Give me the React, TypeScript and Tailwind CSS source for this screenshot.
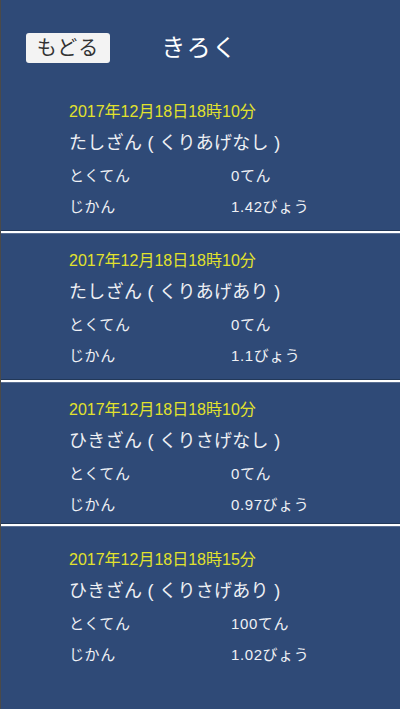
import React from "react";

type Rec = {
  date: string;
  title: string;
  score: string;
  time: string;
  top: string;
  sep: string | null;
};

const records: Rec[] = [
  { date: "2017年12月18日18時10分", title: "たしざん ( くりあげなし )", score: "0てん", time: "1.42びょう", top: "pt-[39px]", sep: "mt-[13px]" },
  { date: "2017年12月18日18時10分", title: "たしざん ( くりあげあり )", score: "0てん", time: "1.1びょう", top: "pt-[17px]", sep: "mt-[13px]" },
  { date: "2017年12月18日18時10分", title: "ひきざん ( くりさげなし )", score: "0てん", time: "0.97びょう", top: "pt-[17px]", sep: "mt-[8px]" },
  { date: "2017年12月18日18時15分", title: "ひきざん ( くりさげあり )", score: "100てん", time: "1.02びょう", top: "pt-[23px]", sep: null },
];

const font = { fontFamily: '"Liberation Sans", "Noto Sans CJK JP", sans-serif' };

export default function App() {
  return (
    <div
      className="w-[400px] h-[709px] bg-[#2f4a77] border-l border-[#4a4a4a] overflow-hidden text-[#eef0f4]"
      style={font}
    >
      <div className="grid grid-cols-[1fr_auto_1fr] items-center pt-[33px]">
        <div className="pl-[25px]">
          <button className="w-[84px] h-[30px] bg-[#f3f3f3] rounded-[3px] text-[#333333] text-[20px] leading-[30px] tracking-[1px] flex items-center justify-center">
            もどる
          </button>
        </div>
        <div className="text-[24px] leading-[30px] tracking-[1.5px] text-white -ml-[2px]">きろく</div>
        <div />
      </div>

      {records.map((r, i) => (
        <div key={i}>
          <div className={`pl-[68px] ${r.top}`}>
            <div className="text-[16px] leading-[20px] text-[#e2e22c]">{r.date}</div>
            <div className="mt-[9px] text-[18px] leading-[24px] tracking-[0.3px]">{r.title}</div>
            <div className="mt-[11px] grid grid-cols-[162px_1fr] text-[15px] leading-[20px] tracking-[0.6px]">
              <span>とくてん</span>
              <span>{r.score}</span>
            </div>
            <div className="mt-[11px] grid grid-cols-[162px_1fr] text-[15px] leading-[20px] tracking-[0.6px]">
              <span>じかん</span>
              <span>{r.time}</span>
            </div>
          </div>
          {r.sep && (
            <div className={r.sep}>
              <div className="h-px bg-[#223858]" />
              <div className="h-[2px] bg-white" />
              <div className="h-px bg-[#5a6f93]" />
            </div>
          )}
        </div>
      ))}
    </div>
  );
}
